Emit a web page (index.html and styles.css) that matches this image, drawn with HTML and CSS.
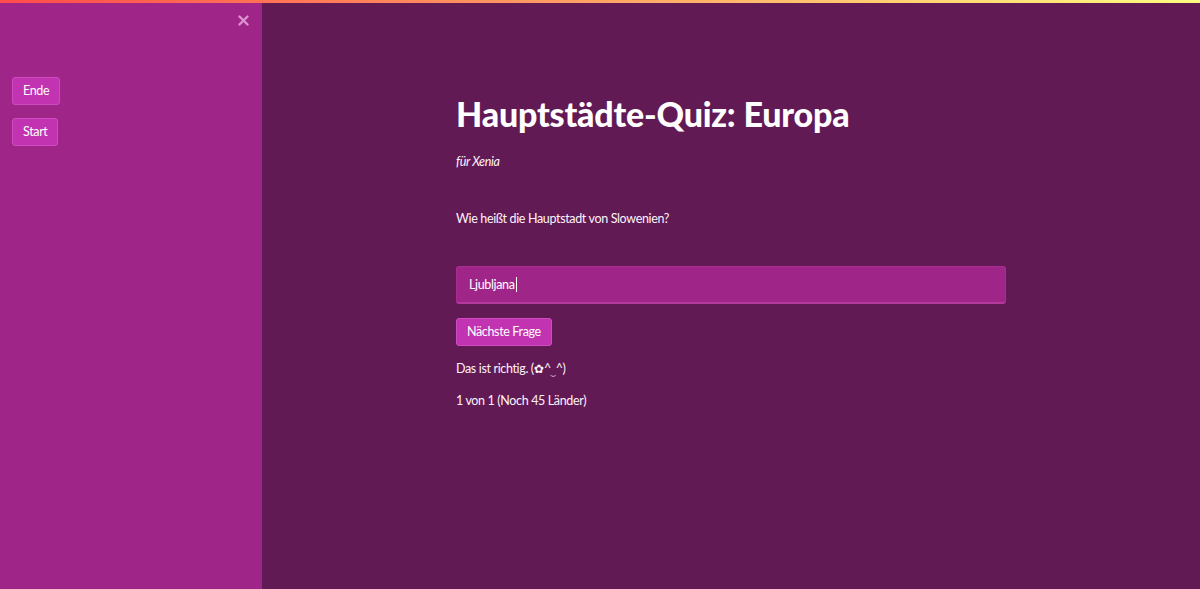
FILE: index.html
```html
<!DOCTYPE html>
<html lang="de">
<head>
<meta charset="utf-8">
<title>Hauptstädte-Quiz</title>
<link rel="stylesheet" href="styles.css">
</head>
<body>
<div class="decoration"></div>
<div class="app">
  <aside class="sidebar">
    <button class="close" aria-label="Schließen">
      <svg width="11" height="11" viewBox="0 0 11 11"><path d="M1.5 1.5 L9.5 9.5 M9.5 1.5 L1.5 9.5" stroke="#dc93cf" stroke-width="2.4" stroke-linecap="round"/></svg>
    </button>
    <div class="side-buttons">
      <button class="btn">Ende</button>
      <button class="btn">Start</button>
    </div>
  </aside>
  <main class="main">
    <div class="block">
      <h1 class="title">Hauptstädte-Quiz: Europa</h1>
      <p class="sub">für Xenia</p>
      <p class="question">Wie heißt die Hauptstadt von Slowenien?</p>
      <div class="input"><span class="value">Ljubljana</span><span class="caret"></span></div>
      <button class="btn next">Nächste Frage</button>
      <p class="result">Das ist richtig. (<span class="flower">✿</span>^<span class="smile">‿</span>^)</p>
      <p class="count">1 von 1 (Noch 45 Länder)</p>
    </div>
  </main>
</div>
</body>
</html>
```
FILE: styles.css
```css
html, body {
  margin: 0;
  padding: 0;
  height: 100%;
}
body {
  background: #621a55;
  color: #fdf3fa;
  font-family: "Lato", "Liberation Sans", sans-serif;
  font-size: 12.5px;
  letter-spacing: -0.35px;
  overflow: hidden;
}
.decoration {
  position: fixed;
  top: 0;
  left: 0;
  right: 0;
  height: 3px;
  background: linear-gradient(90deg, #ff4b4b, #fffd80);
  z-index: 10;
}
.app {
  display: flex;
  height: 100vh;
}
.sidebar {
  position: relative;
  width: 262px;
  flex: 0 0 262px;
  background: #a02588;
  box-sizing: border-box;
  padding: 77px 12px 0;
}
.close {
  position: absolute;
  top: 13px;
  right: 12px;
  width: 14px;
  height: 14px;
  padding: 0;
  border: 0;
  background: transparent;
  display: flex;
  align-items: center;
  justify-content: center;
}
.side-buttons {
  display: flex;
  flex-direction: column;
  align-items: flex-start;
  gap: 13px;
}
.btn {
  font-family: inherit;
  font-size: 12.5px;
  letter-spacing: -0.35px;
  color: #fff;
  background: #c233b1;
  border: 1px solid #cf4bc0;
  border-radius: 3px;
  height: 28px;
  padding: 0 10px;
  line-height: 26px;
  box-sizing: border-box;
}
.main {
  flex: 1;
  display: flex;
  justify-content: center;
}
.block {
  width: 550px;
  padding-top: 92px;
}
.title {
  margin: 0;
  font-size: 34px;
  line-height: 44px;
  font-weight: 900;
  letter-spacing: -0.2px;
  color: #fff;
}
.sub {
  margin: 16px 0 0;
  font-style: italic;
  line-height: 20px;
}
.question {
  margin: 37px 0 0;
  line-height: 20px;
}
.input {
  margin-top: 37px;
  height: 38px;
  box-sizing: border-box;
  background: #a02588;
  border: 1px solid #a92d91;
  border-bottom: 2px solid #b23a9c;
  border-radius: 3px;
  display: flex;
  align-items: center;
  padding-left: 12px;
  color: #fff;
}
.caret {
  display: inline-block;
  width: 1px;
  height: 15px;
  background: #fff;
  margin-left: 1px;
}
.next {
  margin-top: 14px;
  display: block;
}
.result {
  margin: 13px 0 0;
  line-height: 20px;
  height: 20px;
}
.flower {
  font-family: "DejaVu Sans", sans-serif;
  font-size: 12px;
  font-weight: 700;
  letter-spacing: 0;
  line-height: 0;
}
.smile {
  font-family: "DejaVu Sans", sans-serif;
  font-size: 6px;
  line-height: 0;
  vertical-align: -2px;
  letter-spacing: 0;
}
.count {
  margin: 12px 0 0;
  line-height: 20px;
}
```
